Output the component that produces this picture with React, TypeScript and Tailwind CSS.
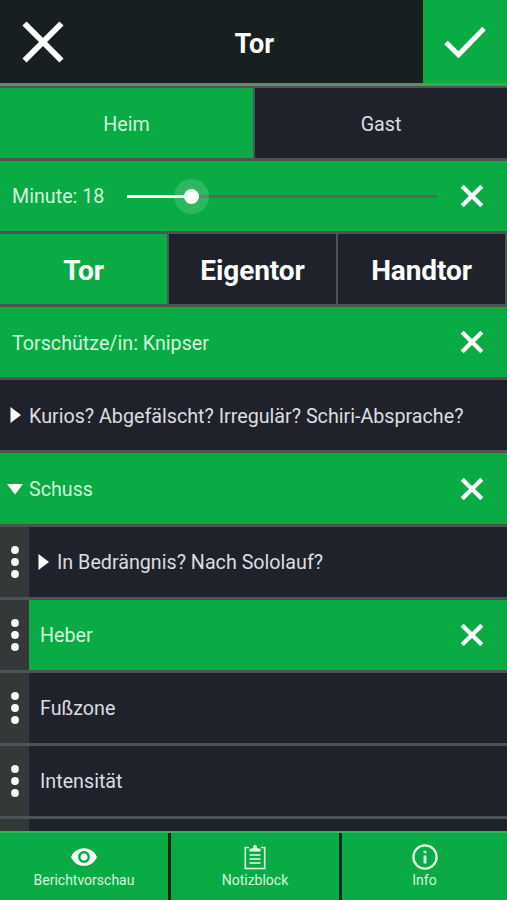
import { ReactNode } from 'react'
import clsx from 'clsx'

type TRow = {
    label: string,
    active?: boolean,
    arrow?: 'right' | 'down',
    nested?: boolean
}

const rows: TRow[] = [
    { label: 'Torschütze/in: Knipser', active: true },
    { label: 'Kurios? Abgefälscht? Irregulär? Schiri-Absprache?', arrow: 'right' },
    { label: 'Schuss', active: true, arrow: 'down' },
    { label: 'In Bedrängnis? Nach Sololauf?', arrow: 'right', nested: true },
    { label: 'Heber', active: true, nested: true },
    { label: 'Fußzone', nested: true },
    { label: 'Intensität', nested: true },
    { label: '', nested: true },
]

const CloseIcon = () => (
    <svg className="w-6 h-6" viewBox="0 0 24 24" fill="none" stroke="white" strokeWidth="4.2">
        <path d="M2.200 2.200l19.600 19.600M21.800 2.200L2.200 21.800" />
    </svg>
)

const ArrowIcon = ({ direction }: { direction: 'right' | 'down' }) => (
    <svg className="w-4 h-4 shrink-0" viewBox="0 0 16 16" fill="white">
        {direction === 'right' ? <path d="M3.5 0v16L14 8z" /> : <path d="M0 3h16L8 13.5z" />}
    </svg>
)

const DragHandle = () => (
    <div className="w-[29px] shrink-0 flex items-center justify-center bg-[#333839]">
        <svg className="w-[29px] h-8" viewBox="0 0 29 32" fill="white">
            <circle cx="15" cy="4" r="3.9" />
            <circle cx="15" cy="16" r="3.9" />
            <circle cx="15" cy="28" r="3.9" />
        </svg>
    </div>
)

const ListRow = ({ label, active, arrow, nested }: TRow) => (
    <div className="h-[73.1px] shrink-0 flex border-b-3 border-[#4e5358]">
        {nested && <DragHandle />}
        <div className={clsx(
            'flex-1 flex items-center pr-[23px]',
            active ? 'bg-[#09ab44]' : 'bg-[#20222b]',
            arrow ? (nested ? 'pl-1.5 gap-1.5' : 'pl-[7px] gap-1.5') : nested ? 'pl-[11px]' : 'pl-3'
        )}>
            {arrow && <ArrowIcon direction={arrow} />}
            <span className={clsx('flex-1 pt-0.5 whitespace-nowrap', active ? 'text-[#d2f5dc]' : 'text-[#dddde0]')}>{label}</span>
            {active && <CloseIcon />}
        </div>
    </div>
)

const FooterTab = ({ label, children }: { label: string, children: ReactNode }) => (
    <button className="flex flex-col items-center bg-[#09ab44] pt-2.5 text-[#d6f7e0] text-sm leading-5">
        <span className="h-[27px] flex items-center justify-center">{children}</span>
        {label}
    </button>
)

const App = () => {
    return (
        <div className="w-full h-[900px] flex flex-col overflow-hidden bg-[#20222b] font-[Roboto,sans-serif] text-[19.7px]">
            <header className="h-[86px] shrink-0 flex border-b-3 border-[#57935f] bg-[#171f20]">
                <div className="w-[84px] flex items-center justify-center">
                    <svg className="w-[42px] h-[42px] ml-0.5" viewBox="0 0 42 42" fill="none" stroke="white" strokeWidth="5.8">
                        <path d="M2.5 2.500l37 37M39.500 2.500l-37 37" />
                    </svg>
                </div>
                <h1 className="flex-1 flex items-center justify-center pt-1.5 pl-0.5 text-[27px] font-bold text-white">Tor</h1>
                <div className="w-[84.5px] -mb-[3px] border-b-3 border-[#29b252] flex items-center justify-center bg-[#09ab44]">
                    <svg className="w-[42px] h-[32px]" viewBox="0 0 42 32" fill="none" stroke="white" strokeWidth="5">
                        <path d="M2 16.5l12.5 12.3L40 2.5" />
                    </svg>
                </div>
            </header>

            <main className="flex-1 min-h-0 flex flex-col overflow-hidden border-t-2 border-[#4e5358]">
                <div className="h-[73.1px] shrink-0 grid grid-cols-[255px_1fr] border-b-3 border-[#4e5358]">
                    <div className="flex items-center justify-center pt-[3px] bg-[#09ab44] text-[#d2f5dc] border-r-2 border-[#4e5358]">Heim</div>
                    <div className="flex items-center justify-center pt-[3px] bg-[#20222b] text-[#dddde0]">Gast</div>
                </div>

                <div className="h-[73.1px] shrink-0 flex items-center bg-[#09ab44] border-b-3 border-[#4e5358] pl-3 pr-[23px]">
                    <span className="w-[115px] pt-0.5 text-[#d2f5dc]">Minute: 18</span>
                    <div className="relative w-[310px] h-9 flex items-center">
                        <div className="h-[3px] w-[64px] bg-white" />
                        <div className="h-[3px] flex-1 bg-[#5c6660]" />
                        <div className="absolute left-[47px] w-[35px] h-[35px] rounded-full bg-white/15 flex items-center justify-center">
                            <div className="w-[15px] h-[15px] rounded-full bg-white" />
                        </div>
                    </div>
                    <span className="ml-auto"><CloseIcon /></span>
                </div>

                <div className="h-[73.1px] shrink-0 grid grid-cols-3 border-b-3 border-[#4e5358] text-[28px] font-bold tracking-[-0.1px] text-white">
                    <div className="flex items-center justify-center pt-1 border-r-2 border-[#4e5358] bg-[#09ab44]">Tor</div>
                    <div className="flex items-center justify-center pt-1 border-r-2 border-[#4e5358] bg-[#20222b]">Eigentor</div>
                    <div className="flex items-center justify-center pt-1 border-r-2 border-[#4e5358] bg-[#20222b]">Handtor</div>
                </div>

                {rows.map((row, index) => <ListRow key={index} {...row} />)}
            </main>

            <footer className="h-[69px] shrink-0 grid grid-cols-[168px_168px_1fr] gap-[3px] border-t-2 border-[#2fba59] bg-[#10251a]">
                <FooterTab label="Berichtvorschau">
                    <svg className="w-[26px] h-[18px]" viewBox="1 4.5 22 15" fill="white">
                        <path d="M12 4.5C7 4.5 2.73 7.61 1 12c1.73 4.39 6 7.5 11 7.5s9.27-3.11 11-7.5c-1.73-4.39-6-7.5-11-7.5zM12 17c-2.76 0-5-2.24-5-5s2.24-5 5-5 5 2.24 5 5-2.24 5-5 5zm0-8c-1.66 0-3 1.34-3 3s1.34 3 3 3 3-1.34 3-3-1.34-3-3-3z" />
                    </svg>
                </FooterTab>
                <FooterTab label="Notizblock">
                    <svg className="w-[22px] h-[26px]" viewBox="0 0 22 26" fill="none" stroke="#e6fbec" strokeWidth="1.6">
                        <path d="M5 3.500H1.300v21h19.400v-21H17" />
                        <path d="M5.500 7.500V5l3.500-1 .8-3h2.400l.8 3 3.500 1v2.500z" fill="#e6fbec" stroke="none" />
                        <path d="M5.500 11h11M5.500 15h11M5.500 19h11" />
                    </svg>
                </FooterTab>
                <FooterTab label="Info">
                    <svg className="w-[26px] h-[26px]" viewBox="0 0 26 26" fill="none" stroke="#e6fbec" strokeWidth="2.3">
                        <circle cx="13" cy="13" r="11.600" />
                        <path d="M13 11.500v8M13 6.700v2.600" strokeWidth="2.800" />
                    </svg>
                </FooterTab>
            </footer>
        </div>
    )
}

export default App
